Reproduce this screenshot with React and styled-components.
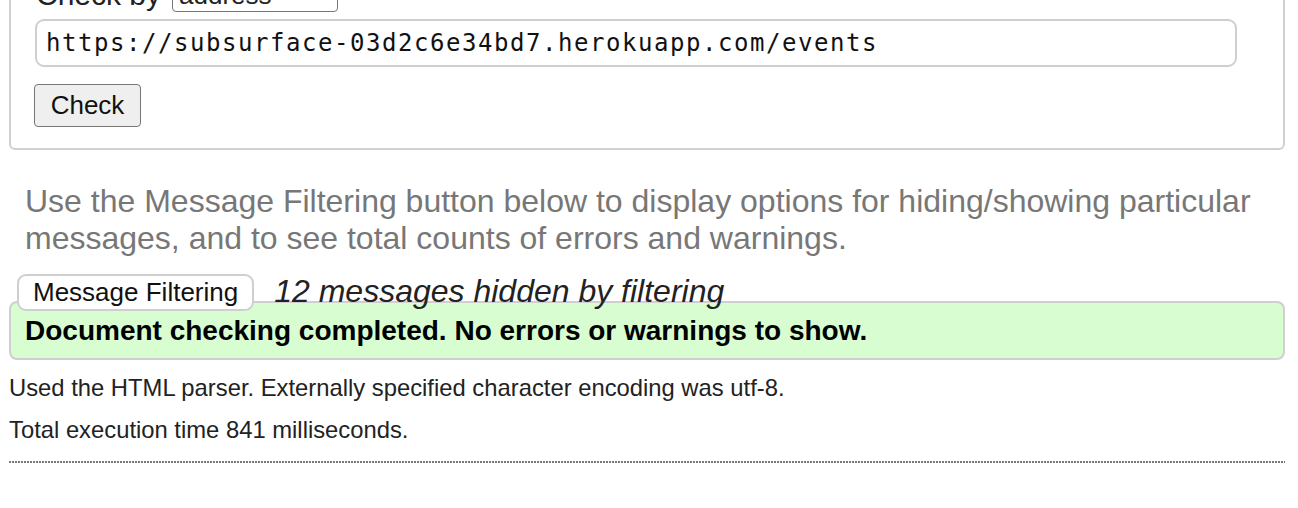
import React from 'react'
import styled, { createGlobalStyle } from 'styled-components'

const GlobalStyle = createGlobalStyle`
  html, body {
    margin: 0;
    padding: 0;
    background: #fff;
  }

  body {
    font-family: "Liberation Sans", Arial, sans-serif;
    color: #222;
    overflow: hidden;
  }
`

const URL = 'https://subsurface-03d2c6e34bd7.herokuapp.com/events'

const App = () => {
  return (
    <>
      <GlobalStyle />
      <Page>
        <CheckForm onSubmit={(e) => e.preventDefault()}>
          <CheckByRow>
            <CheckByLabel>Check by</CheckByLabel>
            <Select defaultValue='address'>
              <option value='address'>address</option>
              <option value='file'>file upload</option>
              <option value='text'>text input</option>
            </Select>
          </CheckByRow>
          <UrlInput type='url' defaultValue={URL} />
          <CheckButton type='submit'>Check</CheckButton>
        </CheckForm>

        <Hint>
          Use the Message Filtering button below to display options for hiding/showing particular
          messages, and to see total counts of errors and warnings.
        </Hint>

        <FilterRow>
          <FilterButton type='button'>Message Filtering</FilterButton>
          <HiddenCount>12 messages hidden by filtering</HiddenCount>
        </FilterRow>

        <Success>Document checking completed. No errors or warnings to show.</Success>

        <Detail>Used the HTML parser. Externally specified character encoding was utf-8.</Detail>
        <Detail>Total execution time 841 milliseconds.</Detail>

        <Divider />
      </Page>
    </>
  )
}

const Page = styled.div`
  padding: 0 13px 40px 9px;
`

const CheckForm = styled.form`
  margin: -40px 0 0;
  border: 2px solid #d0d0d0;
  border-radius: 6px;
  padding: 16px 46px 21px 24px;
  display: flex;
  flex-direction: column;
  align-items: flex-start;
`

const CheckByRow = styled.div`
  display: flex;
  align-items: center;
  gap: 11px;
  height: 34px;
  padding-left: 1px;
`

const CheckByLabel = styled.label`
  font-size: 30px;
  line-height: 30px;
  color: #222;
`

const Select = styled.select`
  width: 166px;
  height: 34px;
  border: 1.5px solid #767676;
  border-radius: 4px;
  background: #fff;
  font-family: "Liberation Sans", Arial, sans-serif;
  font-size: 26px;
  color: #222;
  padding: 0 6px;
  appearance: none;
`

const UrlInput = styled.input`
  box-sizing: border-box;
  align-self: stretch;
  margin-top: 7px;
  height: 48px;
  border: 2px solid #cfcfcf;
  border-radius: 9px;
  padding: 0 9px;
  font-family: "DejaVu Sans Mono", "Liberation Mono", monospace;
  font-size: 24px;
  letter-spacing: 1.55px;
  color: #111;
  outline: none;
`

const CheckButton = styled.button`
  box-sizing: border-box;
  margin-top: 17px;
  margin-left: -1px;
  width: 107px;
  height: 43px;
  border: 1.5px solid #767676;
  border-radius: 4px;
  background: #efefef;
  font-family: "Liberation Sans", Arial, sans-serif;
  font-size: 26px;
  color: #111;
  padding: 0;
`

const Hint = styled.p`
  margin: 33px 0 0 16px;
  font-size: 32px;
  line-height: 37px;
  color: #777;
`

const FilterRow = styled.div`
  position: relative;
  z-index: 1;
  display: flex;
  align-items: center;
  gap: 20px;
  margin: 17px 0 -10px 8px;
`

const FilterButton = styled.button`
  box-sizing: border-box;
  height: 37px;
  padding: 0 14px 0 14px;
  border: 2px solid #cfcfcf;
  border-radius: 9px;
  background: #fff;
  font-family: "Liberation Sans", Arial, sans-serif;
  font-size: 26px;
  color: #111;
`

const HiddenCount = styled.span`
  font-size: 32px;
  font-style: italic;
  color: #222;
  margin-top: -3px;
`

const Success = styled.div`
  box-sizing: border-box;
  height: 59px;
  display: flex;
  align-items: center;
  padding: 1px 14px 0;
  border: 2px solid #cfcfcf;
  border-radius: 8px;
  background: #d7fdd1;
  font-size: 28px;
  font-weight: bold;
  color: #000;
`

const Detail = styled.p`
  margin: 14px 0 0;
  font-size: 23.8px;
  line-height: 28px;
  color: #222;
`

const Divider = styled.hr`
  margin: 17px 0 0;
  border: 0;
  height: 2px;
  background: repeating-linear-gradient(to right, #777 0 2px, transparent 2px 3px);
`

export default App
